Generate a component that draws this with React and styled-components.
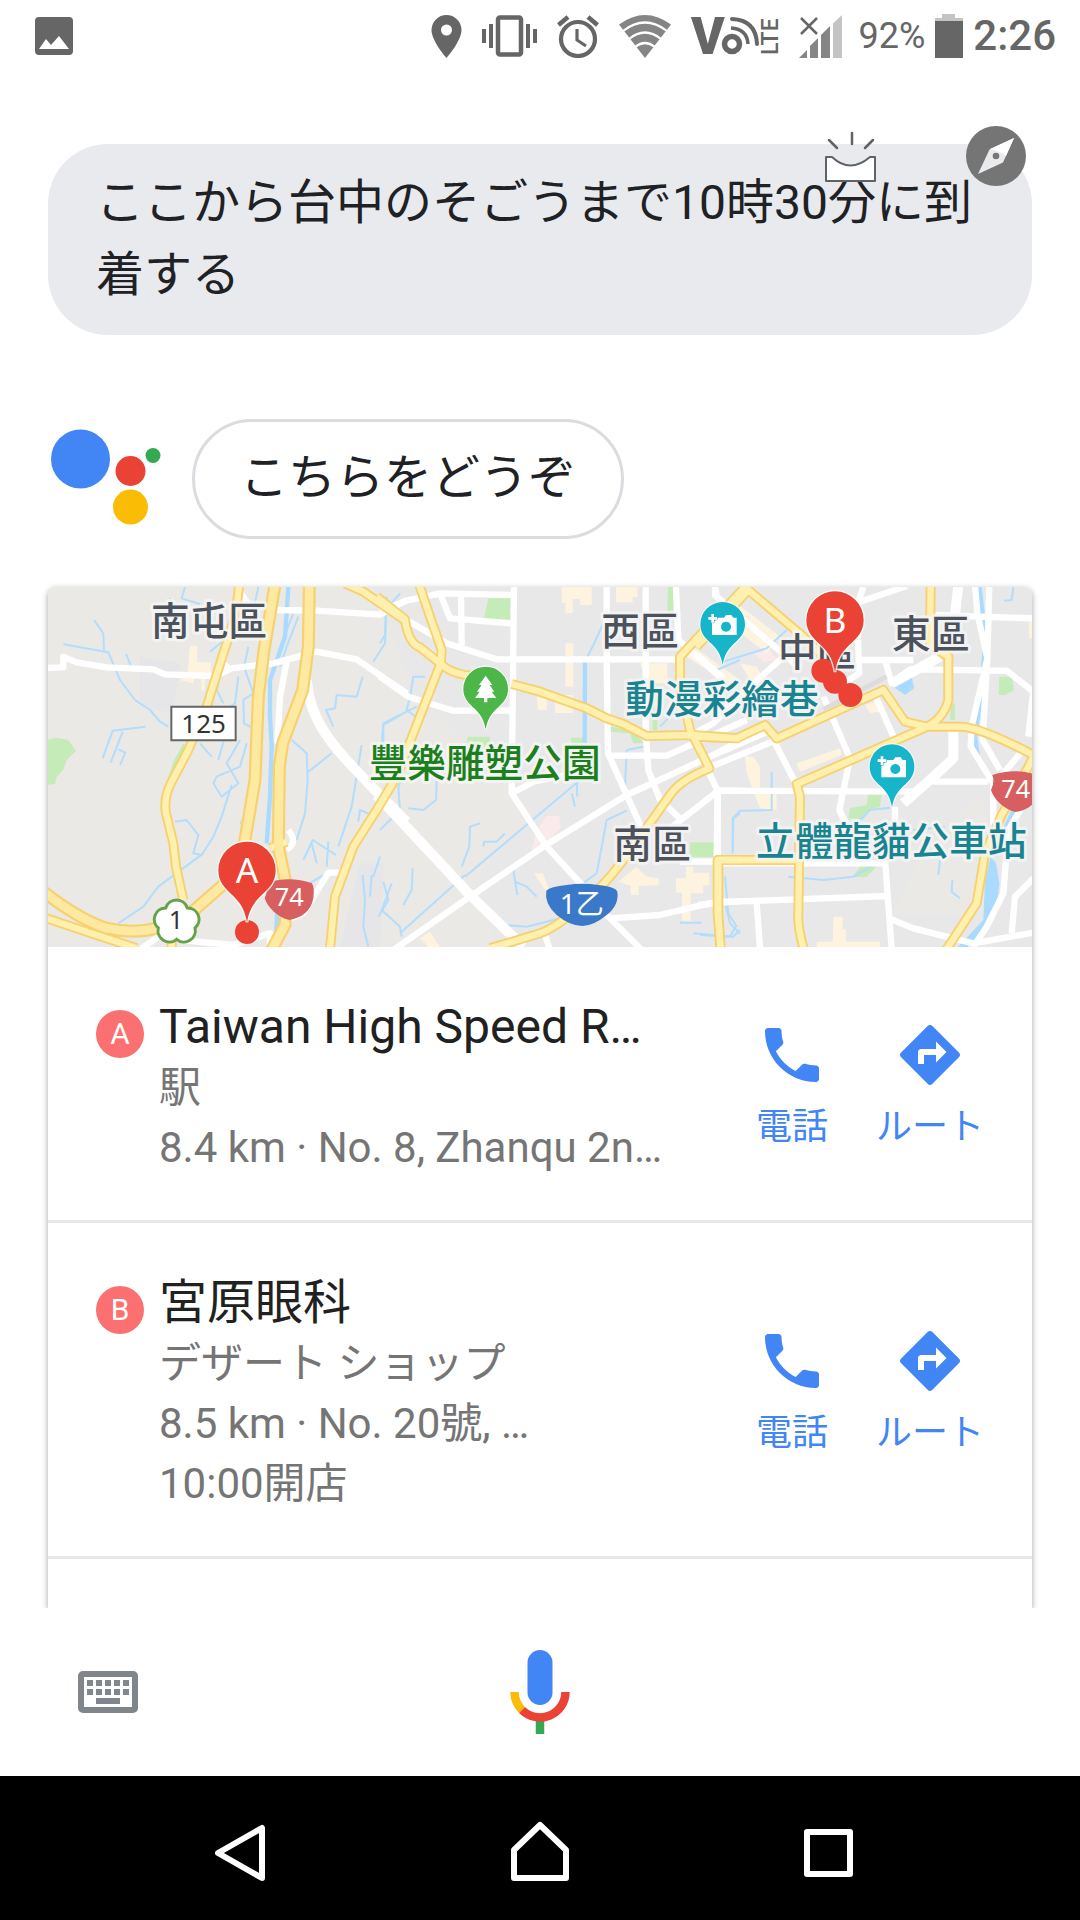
import React from "react";
import styled, { createGlobalStyle } from "styled-components";

const GlobalStyle = createGlobalStyle`
  * {
    box-sizing: border-box;
  }
  body {
    margin: 0;
    background: #fff;
    font-family: Roboto, "Noto Sans CJK JP", sans-serif;
    color: #202124;
  }
  button {
    margin: 0;
    padding: 0;
    border: 0;
    background: none;
    font: inherit;
    color: inherit;
    cursor: pointer;
  }
  svg {
    display: block;
  }
`;

const Screen = styled.div`
  display: grid;
  grid-template-rows: auto 1fr auto auto;
  height: 100vh;
`;

const StatusBar = styled.header`
  display: flex;
  align-items: center;
  justify-content: space-between;
  height: 72px;
  padding: 0 24px 0 35px;
  color: #666;
`;

const StatusSide = styled.div`
  display: flex;
  align-items: center;
  gap: 16px;
`;

const StatusIcons = styled.div`
  display: flex;
  align-items: center;
  gap: 20px;
`;

const BatteryGroup = styled.div`
  display: flex;
  align-items: center;
  gap: 10px;
`;

const VolteIcon = styled.svg`
  overflow: visible;
  font-family: Roboto, sans-serif;
`;

const Percent = styled.span`
  font-size: 36px;
  line-height: 48px;
`;

const Clock = styled.time`
  font-size: 42px;
  font-weight: 500;
  line-height: 48px;
`;

const Conversation = styled.main`
  display: flex;
  flex-direction: column;
  min-height: 0;
  padding: 72px 48px 0;
  overflow: hidden;
`;

const Query = styled.div`
  position: relative;
  padding: 23px 48px 24px;
  border-radius: 60px;
  background: #e8eaed;
  font-size: 48px;
  line-height: 72px;
`;

const QueryText = styled.p`
  margin: 0;
`;

const Explore = styled.button`
  position: absolute;
  top: -18px;
  right: 6px;
`;

const Updates = styled.button`
  position: absolute;
  top: -14px;
  right: 155px;
`;

const Reply = styled.div`
  display: flex;
  gap: 24px;
  margin-top: 84px;
`;

const ReplyText = styled.p`
  margin: 0;
  padding: 20px 45px 22px;
  border: 3px solid #dadce0;
  border-radius: 60px;
  font-size: 48px;
  line-height: 72px;
`;

const Card = styled.section`
  flex: 1 0 auto;
  margin-top: 48px;
  border-radius: 8px 8px 0 0;
  background: #fff;
  box-shadow: 0 2px 6px rgba(0, 0, 0, 0.36);
`;

const MapView = styled.svg`
  width: 100%;
  height: auto;
  border-radius: 8px 8px 0 0;
  overflow: hidden;
`;

const Place = styled.article`
  display: flex;
  gap: 15px;
  padding: 49px 48px 42px;
  border-bottom: 3px solid #e8e8e8;
`;

const Badge = styled.span`
  flex: none;
  width: 48px;
  height: 48px;
  margin-top: 14px;
  border-radius: 50%;
  background: #fb7070;
  color: #fff;
  font-size: 30px;
  line-height: 48px;
  text-align: center;
`;

const PlaceInfo = styled.div`
  flex: 1;
  min-width: 0;
`;

const PlaceName = styled.h2`
  margin: 0;
  font-size: 48px;
  font-weight: 400;
  line-height: 62px;
  color: #212121;
`;

const PlaceLine = styled.p`
  margin: 0;
  font-size: 42px;
  line-height: 60px;
  color: #757575;
`;

const Actions = styled.div`
  display: flex;
  align-items: center;
  gap: 48px;
`;

const Action = styled.button`
  display: flex;
  flex-direction: column;
  align-items: center;
  gap: 8px;
  color: #4285f4;
  font-size: 36px;
  line-height: 56px;
`;

const InputBar = styled.footer`
  display: grid;
  grid-template-columns: 1fr auto 1fr;
  align-items: center;
  justify-items: start;
  height: 168px;
  padding: 0 72px;
  background: #fff;
`;

const NavBar = styled.nav`
  display: flex;
  justify-content: center;
  gap: 192px;
  padding: 24px 0;
  background: #000;
`;

/* every tile is drawn from its own left edge, x moves it into place */
const tiles = [
  {
    x: 0,
    parks: [
      "M20 480 L50 473 L85 480 L108 512 L80 540 L70 570 L50 590 L45 612 L20 615Z",
      "M430 490 L445 500 L400 600 L383 600 L400 545Z",
    ],
    blocks: [
      "M450 197h22v50h40v30h-18v55h-10v-50h-20l-4 28-40-10 22-15Z",
    ],
    water: [
      "M162 120 L190 160 L192 210 M70 193 L205 217 L240 300 L285 360 L330 390 L360 425 L385 440",
      "M316 440 L218 452 L188 535 M248 455 L212 548 M235 508 L256 518 L240 555",
      "M258 222 L272 256 M435 21 L425 55 L480 72 M388 55 L405 80",
      "M655 21 L640 90 L650 130 M560 175 L510 215 M625 200 L612 260 L640 340 L610 360 L612 430 L640 445",
      "M595 290 L585 370 L545 400 L560 450 L535 540 M545 260 L530 330 L550 370 M600 480 L560 550 L595 610 L545 650 L520 610 L530 590 L600 560 L620 490",
      "M480 490 L515 530 M575 615 L545 710 L520 770 L485 825 L460 820 L475 765 L440 720 L405 725 M640 690 L600 730",
      "M775 110 L740 200 L720 260 M760 100 L715 215 M755 480 L800 520 L803 600 L795 700 L770 780 M805 575 L875 520",
      "M1040 50 L1035 190 L1000 245 M968 290 L950 350 L890 345 L885 385 L858 390 L880 440",
      "M1080 405 L1030 430 L1030 530 M965 495 L935 680 L895 800 M985 700 L960 690 L955 725 M1020 830 L1000 890",
      "M490 820 L355 920 L310 980 L235 1030 M790 840 L818 780 L888 825 M830 850 L815 790 M865 785 L860 860 M790 920 L860 880",
      "M968 885 L975 960 L970 1040 L985 1100 M995 885 L990 950 M1030 905 L1045 960 L1015 1010",
    ],
    rivers: [
      "M745 21 L735 170 L690 300 L690 410 L695 500 L690 650 L680 790",
      "M712 990 L706 1100",
    ],
    streets: [
      "M20 264 L70 262 L70 230 L110 247 L200 262 L340 268 L375 283 L525 288 L575 265 L700 250 L830 215 L950 238 L1100 340",
      "M603 40 L632 84 M700 90 L830 92 L1020 104 L1100 60 M545 245 L570 270",
      "M740 245 L720 350 L712 490",
      "M745 750 Q776 790 740 808 M910 878 L865 878 L790 1000 L740 1020",
      "M440 1082 L580 1095 L690 1060 L690 1100 M305 1105 L370 1060",
    ],
    avenues: ["M800 300 C810 430 880 500 1000 625 L1100 725"],
    yellow: [
      "M597 21 Q590 110 550 220 L500 380 L445 510 L395 605 Q370 650 378 700 L400 790 L408 860 L430 960",
      "M20 1015 L140 1055 L290 1105 M395 1105 L395 1060",
      "M915 10 L970 35 L1100 125",
      "M1070 590 L1010 690 L940 800 L885 950 L870 1105",
      "M690 805 L740 785",
    ],
    motorways: [
      "M705 15 L672 210 L655 350 L645 600 L610 810",
      "M808 15 L805 200 L788 330 L728 490 L718 560 L715 800 L740 920 L735 1035 L695 1110",
      "M10 935 Q120 1020 200 1045 Q280 1062 350 1045 L440 1010 L560 905",
    ],
  },
  {
    x: 1020,
    parks: [
      "M325 55 L392 55 L390 122 L312 116Z",
      "M262 470h68v26h-10v30h-40v-30h-18Z",
      "M572 473 L612 473 L612 498 L578 498Z",
      "M864 21h16v80h-18Z M818 250h14v200h-14Z",
      "M690 440 L760 450 L790 490 L760 490 L750 460 L690 455Z",
      "M930 787h72v44h-72Z",
    ],
    blocks: [
      "M545 21h90v54h-35v-18h-22v42h-22v-30h-10Z M708 21h65v30h-15v16h-50Z",
      "M556 190h24v130h-24Z M470 350h30v40h-26Z M525 345h54v54h-54Z",
      "M888 895h30v-35h22v18h48v38h-18v24h-38v82h-26v-84h-18Z",
      "M715 905 L770 860 L800 890 L836 895 L836 915 L776 918 L776 945 L752 945 L752 918Z",
      "M462 880h26l24 60-20-15Z M780 250h82v60h-60Z",
      "M940 200 L1080 300 L1060 320 L920 230Z M120 1075 L150 1055 L180 1100 L150 1105Z",
    ],
    water: [
      "M60 40 L18 90 L15 165 L0 190 M135 290 L100 290 L92 340 L80 390 L120 420 M110 380 L70 400 L10 435 L5 490",
      "M0 750 L60 690 L55 620 L70 590 M170 600 L168 660 L130 690 L85 685",
      "M670 130 L640 195 L615 245 M600 600 L255 890 M375 760 L350 785 L312 785 L310 800 M300 730 L270 740 L268 800 L245 860",
      "M575 640 L585 680 M590 610 L592 650 M740 510 L735 620 M740 692 L680 720 L650 880 L605 912 M740 510 L790 500",
      "M255 885 L60 1060 M98 865 L95 930 L70 975 M35 910 L5 990 L60 1040 L65 1070 M400 870 L412 945 M405 905 L440 920 L470 950",
      "M370 1035 L440 1040 L540 1015 M840 440 L890 390 M1080 240 L1010 270 M940 1060 L1060 1070 L1080 1050 M900 1028 L965 1028 M1035 970 L1050 1030 L1080 1060",
      "M1080 700 L1060 715 L1058 820",
    ],
    rivers: ["M615 235 L614 490"],
    streets: [
      "M0 92 L80 62 L180 40 L410 45 M243 45 L245 195 M180 40 L210 115 L395 130",
      "M80 120 L200 190 L350 238 L900 238",
      "M0 290 L85 350 L220 392 L390 392",
      "M402 21 L395 640 L500 800 L620 930",
      "M40 1110 L270 950 L490 800 L740 645 L990 530 L1100 470",
      "M395 640 L460 605 L560 585",
      "M680 21 L680 240 L684 520 L785 745",
      "M797 21 L797 460 L805 570 L840 660 L900 715",
      "M680 527 L860 527 L1100 420 M935 465 L1000 430 L1060 370",
      "M888 21 L895 180 L1030 300 M1005 21 L1010 45",
      "M875 742 L1015 632 L1080 632 M985 575 L1013 632 L1013 845 M900 845 L1013 845",
      "M690 1015 L840 1005 L1010 965 L1080 965 M680 1005 L785 1110 M495 1065 L508 1105",
    ],
    avenues: ["M-10 645 L270 945 L430 1100"],
    yellow: [
      "M118 15 L150 110 L185 210 L182 250 L100 460 L50 590",
      "M-10 50 L75 118 Q85 190 120 202 L195 262 Q230 285 280 288",
      "M395 312 L480 335 L620 385 L680 415 L730 432 L800 468 L935 465 L1080 475",
      "M1105 10 L900 230 L900 320 L930 450 L988 565 Q900 600 870 645 L760 800 Q680 910 640 940 Q540 1040 480 1060 L330 1105",
      "M1085 840 L1013 840 L1013 1000 L1022 1110",
    ],
    motorways: [],
  },
  {
    x: 1980,
    parks: [
      "M898 290 L935 290 L942 330 L915 345 L896 345Z",
      "M505 643 L545 643 L540 680 L510 690 L490 718 L445 715 L450 685 L500 675Z",
      "M458 892 L480 860 L540 850 L500 890Z",
      "M752 370h13v50h-15Z",
    ],
    blocks: [
      "M135 528 L160 530 L180 560 L180 640 L230 640 L230 690 L180 685 L140 580Z",
      "M290 550 L420 505 L425 525 L300 575Z M495 375 L525 365 L540 395 L510 400Z",
      "M400 1010h28v38h10v48h-40Z M350 1085h190v20h-190Z M0 880h28v36h-28Z",
      "M70 120 L110 70 L240 170 L200 220Z M120 250 L170 260 L200 310 L150 300Z",
      "M985 120h15v55h-12Z",
    ],
    water: [
      "M215 575 L215 690 L120 692 L98 715 L98 815 M480 720 L510 690 L570 683",
      "M265 890 L370 900 L460 890 L530 850 M720 840 L715 885 M757 900 L755 935 L780 955",
      "M75 890 L85 1000 L110 1040 M0 1065 L90 1070 L110 1035 M940 21 L935 60 L912 62 M70 245 L200 205 L260 150",
      "M735 740 L640 750",
    ],
    rivers: ["M838 15 L856 170 L845 330 L825 470 L835 540 L880 605", "M960 650 L900 780 L885 830"],
    lakes: [
      "M590 290 L635 287 L642 325 L615 345 L580 320Z",
      "M872 830 L888 850 L898 910 L890 980 L850 1050 L800 1105 L770 1105 L850 1020 L855 900Z",
    ],
    streets: [
      "M45 21 L45 45 L120 110 L300 265 M490 21 L470 80 L478 280 L430 310 M480 65 L620 18",
      "M-10 225 L70 295 M245 235 L60 400 M480 240 L640 240 M555 240 L575 310 L630 268 L920 272 L1000 335",
      "M700 105 L1000 115",
      "M825 15 L832 100 L862 235 M868 15 L862 235 L815 440 L812 500 L880 610 L880 740 M862 235 L848 480 L900 570",
      "M1000 330 L985 470 M970 510 L880 615 M865 605 L700 605",
      "M40 632 L640 635 M-5 545 L215 450 M20 565 L230 480",
      "M215 470 L290 615 M370 350 L450 535 L418 690 L440 735 M525 345 L585 480 M585 680 L585 740",
      "M53 630 L50 830 M50 850 L560 850 M555 840 L575 1105 M-5 975 L100 965 L560 948 M170 970 L180 1105",
      "M575 1018 L640 1045 L820 1090 L1000 1058 M1000 895 L945 950 L935 1060 M960 690 L925 750 L910 940 L860 1040 L820 1100",
    ],
    avenues: ["M775 15 L765 105", "M575 310 L720 230", "M760 440 L760 535 L690 600 L610 670"],
    yellow: [
      "M-10 200 L145 30 L310 170 L400 260",
      "M-20 470 L110 475 L195 435 L230 475 L550 330 L615 425 L680 440 L780 440 Q840 440 1010 530",
      "M692 15 L690 195 L745 230 L745 360 Q730 420 670 445 L290 612 L300 650 L295 1000 Q292 1040 312 1110",
      "M300 840 L55 840 L55 1000 L62 1110",
      "M1010 510 L985 560 L905 705 L855 820 L830 970 L735 1115",
    ],
    motorways: [],
  },
];

const layers = [
  { key: "parks", fill: "#c5ebb8" },
  { key: "blocks", fill: "#fdf3df" },
  { key: "lakes", fill: "#a9daff" },
  { key: "water", stroke: "#b3ddfc", strokeWidth: 6 },
  { key: "rivers", stroke: "#a9daff", strokeWidth: 13 },
  { key: "streets", stroke: "#fff", strokeWidth: 19 },
  { key: "avenues", stroke: "#fff", strokeWidth: 30 },
  { key: "yellow", stroke: "#f7d070", strokeWidth: 30 },
  { key: "motorways", stroke: "#f7d070", strokeWidth: 39 },
  { key: "yellow", stroke: "#fff0ae", strokeWidth: 19 },
  { key: "motorways", stroke: "#fee9a0", strokeWidth: 26 },
];

const MapLabel = styled.text`
  font-family: "Noto Sans CJK TC", sans-serif;
  font-size: 116px;
  font-weight: 500;
  fill: ${(p) => p.$color || "#4c525c"};
  stroke: rgba(245, 245, 245, 0.85);
  stroke-width: 18px;
  stroke-linejoin: round;
  paint-order: stroke;
`;

const ShieldText = styled.text`
  font-family: "Noto Sans", "Noto Sans CJK TC", sans-serif;
  font-size: ${(p) => p.$size || 76}px;
  text-anchor: middle;
  fill: ${(p) => p.$color || "#fff"};
`;

const PinLetter = styled.text`
  font-family: "Noto Sans", sans-serif;
  font-size: 106px;
  text-anchor: middle;
  fill: #fff;
`;

const Pin = ({ x, y, color, scale = 1, children }) => (
  <g transform={`translate(${x} ${y})`}>
    <path
      transform={`scale(${scale})`}
      d="M0 156C-7 118-18 100-42 76C-66 54-86 36-86 0A86 86 0 1 1 86 0C86 36 66 54 42 76C18 100 7 118 0 156Z"
      fill={color}
      stroke="#fff"
      strokeOpacity="0.8"
      strokeWidth="8"
      paintOrder="stroke"
    />
    {children}
  </g>
);

const Camera = () => (
  <g fill="#fff">
    <path
      fillRule="evenodd"
      d="M-32-10h10v-10h26l6-8h16l6 8h10v52h-74Z M10-8a15 15 0 1 0 .1 0Z"
    />
    <path d="M-34-31h8v9h9v8h-9v9h-8v-9h-9v-8h9Z" stroke="#17b5ca" strokeWidth="3" paintOrder="stroke" />
  </g>
);

const RedShield = ({ x, y }) => (
  <g transform={`translate(${x} ${y})`}>
    <path d="M-70-45Q0-68 68-44Q76-30 72 0C66 40 35 60 0 66C-35 58-66 28-74 0Q-62-24-70-45Z" fill="#d85f60" />
    <ShieldText y="24">74</ShieldText>
  </g>
);

const RouteMap = () => (
  <MapView viewBox="24 21 2952 1080" role="img" aria-label="地図">
    <path d="M0 0H3000V1110H0Z" fill="#e8e8e8" />
    <path
      d="M24 21H1000L1120 330L1400 620L1480 700L1300 900L1380 1110H24Z M2560 1000L2640 830L2820 640L2870 800L2790 1000Z"
      fill="#eae9e5"
    />
    <path d="M300 230 L420 250 L400 400 L300 380Z M960 850 L1030 850 L1020 1100 L900 1100Z" fill="#e6e6e8" />
    <path d="M1475 810 L1490 750 L1520 708 L1558 708 L1562 745 L1520 790 L1490 810Z M2140 220 L2190 210 L2210 240 L2170 246Z" fill="#faeaec" />
    {layers.map((layer, i) => (
      <g
        key={i}
        fill={layer.fill || "none"}
        stroke={layer.stroke}
        strokeWidth={layer.strokeWidth}
        strokeLinejoin="round"
      >
        {tiles.map((tile) => (
          <path key={tile.x} transform={`translate(${tile.x} 0)`} d={(tile[layer.key] || []).join(" ")} />
        ))}
      </g>
    ))}
    <path d="M2350 388 L2540 290" stroke="#dcdcdc" strokeWidth="14" />

    <MapLabel x="333" y="165">南屯區</MapLabel>
    <MapLabel x="1684" y="196">西區</MapLabel>
    <MapLabel x="2214" y="259">中區</MapLabel>
    <MapLabel x="2556" y="204">東區</MapLabel>
    <MapLabel x="1720" y="834">南區</MapLabel>
    <MapLabel x="986" y="592" $color="#1b801b">豐樂雕塑公園</MapLabel>
    <MapLabel x="1756" y="398" $color="#188491">動漫彩繪巷</MapLabel>
    <MapLabel x="2148" y="826" $color="#188491">立體龍貓公車站</MapLabel>

    <path d="M394 380H587V481H394Z" fill="#fff" stroke="#666" strokeWidth="6" />
    <ShieldText x="491" y="458" $size="78" $color="#333">125</ShieldText>
    <path
      d="M377 984A34 34 0 0 1 442 984A34 34 0 0 1 465 1044A34 34 0 0 1 410 1078A34 34 0 0 1 355 1044A34 34 0 0 1 377 984Z"
      fill="#fff"
      stroke="#66a24a"
      strokeWidth="9"
    />
    <ShieldText x="408" y="1046" $color="#333">1</ShieldText>
    <RedShield x={748} y={954} />
    <RedShield x={2927} y={630} />
    <path
      d="M1519 932Q1530 920 1580 915Q1627 908 1675 915Q1726 920 1732 935Q1738 975 1700 1005Q1660 1038 1627 1038Q1590 1038 1550 1005Q1512 970 1519 932Z"
      fill="#3a78c9"
    />
    <ShieldText x="1625" y="1001" $size="84">1乙</ShieldText>

    <Pin x={1337} y={327} color="#4db648" scale={0.78}>
      <path d="M0-40L20-12H12L26 8H18L32 27H5V40H-5V27H-32L-18 8H-26L-12-12H-20Z" fill="#fff" />
    </Pin>
    <Pin x={2048} y={133} color="#17b5ca" scale={0.78}>
      <Camera />
    </Pin>
    <Pin x={2556} y={560} color="#17b5ca" scale={0.78}>
      <Camera />
    </Pin>

    <g fill="#ea4335">
      <circle cx="621" cy="1056" r="36" />
      <circle cx="2350" cy="272" r="36" />
      <circle cx="2385" cy="305" r="36" />
      <circle cx="2431" cy="345" r="36" />
    </g>
    <Pin x={621} y={871} color="#ea4335">
      <PinLetter y="38">A</PinLetter>
    </Pin>
    <Pin x={2385} y={120} color="#ea4335">
      <PinLetter y="40">B</PinLetter>
    </Pin>
  </MapView>
);

const PictureIcon = () => (
  <svg width="38" height="38" viewBox="0 0 38 38">
    <path fillRule="evenodd" fill="#666" d="M4 0h30a4 4 0 0 1 4 4v30a4 4 0 0 1-4 4H4a4 4 0 0 1-4-4V4a4 4 0 0 1 4-4ZM4 32h30L24 19l-8 9-5-6Z" />
  </svg>
);

const StatusRow = () => (
  <StatusSide>
    <StatusIcons>
      <svg width="31" height="43" viewBox="0 0 31 43">
        <path fillRule="evenodd" fill="#666" d="M15.500 0A15 15 0 0 0 .5 15c0 11 15 28 15 28s15-17 15-28a15 15 0 0 0-15-15Zm0 9.500a5.500 5.500 0 1 1 0 11 5.500 5.500 0 0 1 0-11Z" />
      </svg>
      <svg width="55" height="42" viewBox="0 0 55 42">
        <rect x="16" y="2.500" width="23" height="37" rx="2" fill="none" stroke="#666" strokeWidth="4.500" />
        <path fill="#666" d="M0 14h4v14H0ZM7 9h4v24H7ZM44 9h4v24h-4ZM51 14h4v14h-4Z" />
      </svg>
      <svg width="42" height="43" viewBox="0 0 42 43" fill="none" stroke="#666">
        <circle cx="21" cy="24" r="17" strokeWidth="4.200" />
        <path d="M20 14v11l9 6" strokeWidth="3.200" />
        <path d="M1.500 10L11 2M31 2l9.500 8" strokeWidth="4.500" />
      </svg>
      <svg width="52" height="43" viewBox="0 0 52 43">
        <path fill="#858585" d="M26 43L0 9.500Q26-9.500 52 9.500Z" />
        <path fill="none" stroke="#fff" strokeWidth="2.200" d="M4 16Q26-1 48 16M10 24Q26 11 42 24M16 32Q26 24 36 32" />
      </svg>
      <VolteIcon width="88" height="42" viewBox="0 0 88 42" fill="#666">
        <text x="0" y="39" fontSize="51" fontWeight="900">V</text>
        <circle cx="41" cy="29" r="7.500" fill="none" stroke="#666" strokeWidth="5.500" />
        <path fill="none" stroke="#666" strokeWidth="3.500" d="M40 13Q56 14 57 29" />
        <path fill="none" stroke="#666" strokeWidth="4" strokeLinecap="round" d="M41 4Q65 5 66 29" />
        <text transform="translate(87 40) rotate(-90)" fontSize="23" fontWeight="500">LTE</text>
      </VolteIcon>
      <svg width="43" height="43" viewBox="0 0 43 43">
        <path fill="#858585" d="M0 43L8 35V43ZM11 31L19 23V43H11Z" />
        <path fill="#858585" d="M22 20L31 11V43H22Z" />
        <path fill="#c4c4c4" d="M34 8.500L43 0V43H34Z" />
        <path d="M2 3L18 19M18 3L2 19" stroke="#666" strokeWidth="2.500" />
      </svg>
    </StatusIcons>
    <BatteryGroup>
      <Percent>92%</Percent>
      <svg width="28" height="44" viewBox="0 0 28 44">
        <path fill="#c4c4c4" d="M7 0H20V4H28V8H0V4H7Z" />
        <path fill="#666" d="M0 7H28V44H0Z" />
      </svg>
      <Clock>2:26</Clock>
    </BatteryGroup>
  </StatusSide>
);

const CompassIcon = () => (
  <svg width="60" height="60" viewBox="0 0 60 60">
    <path
      fill="#757575"
      fillRule="evenodd"
      d="M30 0a30 30 0 1 1 0 60 30 30 0 0 1 0-60ZM48 12L23.500 23.500 12 48l25-11.500Z"
    />
    <path fill="#fff" d="M48 12L24 23Q34 25 40 30Z" />
    <circle cx="30" cy="30" r="3.300" fill="#757575" />
  </svg>
);

const TrayIcon = () => (
  <svg width="53" height="54" viewBox="0 0 53 54" stroke="#5f6368" strokeWidth="2" strokeLinejoin="round" strokeLinecap="round">
    <path d="M28 3v11M5 10l8 8M49 10l-8 8" strokeWidth="2.500" />
    <path d="M2 27h6q18 17 38 0h5v24H2Z" fill="#fff" />
  </svg>
);

const AssistantLogo = () => (
  <svg width="120" height="120" viewBox="0 0 120 120">
    <circle cx="32.500" cy="40" r="29.500" fill="#4285f4" />
    <circle cx="82.500" cy="52" r="15" fill="#ea4335" />
    <circle cx="82.500" cy="88" r="17.500" fill="#fbbc05" />
    <circle cx="105" cy="36.500" r="7.500" fill="#34a853" />
  </svg>
);

const PhoneIcon = () => (
  <svg width="72" height="72" viewBox="0 0 24 24" fill="currentColor">
    <path d="M20 15.500c-1.250 0-2.450-.2-3.570-.57-.1-.03-.21-.05-.31-.05-.26 0-.51.1-.71.29l-2.200 2.200c-2.830-1.440-5.150-3.750-6.590-6.590l2.200-2.210c.28-.26.36-.65.25-1C8.700 6.450 8.500 5.250 8.500 4c0-.55-.45-1-1-1H4c-.55 0-1 .45-1 1 0 9.390 7.610 17 17 17 .55 0 1-.45 1-1v-3.500c0-.55-.45-1-1-1z" />
  </svg>
);

const DirectionsIcon = () => (
  <svg width="72" height="72" viewBox="0 0 24 24" fill="currentColor">
    <path d="M21.710 11.290l-9-9c-.39-.39-1.020-.39-1.410 0l-9 9c-.39.39-.39 1.020 0 1.410l9 9c.39.39 1.020.39 1.410 0l9-9c.39-.38.39-1.010 0-1.410zM14 14.500V12h-4v3H8v-4c0-.55.45-1 1-1h5V7.500l3.500 3.500-3.500 3.500z" />
  </svg>
);

const KeyboardIcon = () => (
  <svg width="72" height="72" viewBox="0 0 72 72">
    <rect x="9" y="18" width="54" height="36" rx="2" fill="none" stroke="#80868b" strokeWidth="6" />
    <path
      fill="#80868b"
      d="M15 24h6v6h-6ZM24 24h6v6h-6ZM33 24h6v6h-6ZM42 24h6v6h-6ZM51 24h6v6h-6ZM15 33h6v6h-6ZM24 33h6v6h-6ZM33 33h6v6h-6ZM42 33h6v6h-6ZM51 33h6v6h-6ZM24 42h24v6H24Z"
    />
  </svg>
);

const MicIcon = () => (
  <svg width="96" height="96" viewBox="0 0 96 96" fill="none" strokeWidth="8.500">
    <rect x="35.500" y="6" width="25" height="55" rx="12.500" fill="#4285f4" />
    <path d="M48 76V90" stroke="#34a853" />
    <path d="M22.500 48A25.500 25.500 0 0 0 30 66" stroke="#fbbc05" />
    <path d="M30 66A25.500 25.500 0 0 0 73.500 48" stroke="#ea4335" />
  </svg>
);

const NavIcon = ({ d }) => (
  <svg width="96" height="96" viewBox="0 0 96 96" fill="none" stroke="#fff" strokeWidth="6" strokeLinejoin="round">
    <path d={d} />
  </svg>
);

const places = [
  {
    mark: "A",
    name: "Taiwan High Speed R…",
    lines: ["駅", "8.4 km · No. 8, Zhanqu 2n…"],
  },
  {
    mark: "B",
    name: "宮原眼科",
    lines: ["デザート ショップ", "8.5 km · No. 20號, …", "10:00開店"],
  },
];

const App = () => {
  return (
    <Screen lang="ja">
      <GlobalStyle />
      <StatusBar>
        <PictureIcon />
        <StatusRow />
      </StatusBar>

      <Conversation>
        <Query>
          <QueryText>ここから台中のそごうまで10時30分に到着する</QueryText>
          <Updates type="button" aria-label="最新情報">
            <TrayIcon />
          </Updates>
          <Explore type="button" aria-label="探索">
            <CompassIcon />
          </Explore>
        </Query>

        <Reply>
          <AssistantLogo />
          <ReplyText>こちらをどうぞ</ReplyText>
        </Reply>

        <Card>
          <RouteMap />
          {places.map((place) => (
            <Place key={place.mark}>
              <Badge>{place.mark}</Badge>
              <PlaceInfo>
                <PlaceName>{place.name}</PlaceName>
                {place.lines.map((line) => (
                  <PlaceLine key={line}>{line}</PlaceLine>
                ))}
              </PlaceInfo>
              <Actions>
                <Action type="button">
                  <PhoneIcon />
                  電話
                </Action>
                <Action type="button">
                  <DirectionsIcon />
                  ルート
                </Action>
              </Actions>
            </Place>
          ))}
        </Card>
      </Conversation>

      <InputBar>
        <button type="button" aria-label="キーボード">
          <KeyboardIcon />
        </button>
        <button type="button" aria-label="音声入力">
          <MicIcon />
        </button>
      </InputBar>

      <NavBar>
        <button type="button" aria-label="戻る">
          <NavIcon d="M14 53L58 28V78Z" />
        </button>
        <button type="button" aria-label="ホーム">
          <NavIcon d="M22 50L48 25L74 50V78H22Z" />
        </button>
        <button type="button" aria-label="履歴">
          <NavIcon d="M27 32H70V74H27Z" />
        </button>
      </NavBar>
    </Screen>
  );
};

export default App;
